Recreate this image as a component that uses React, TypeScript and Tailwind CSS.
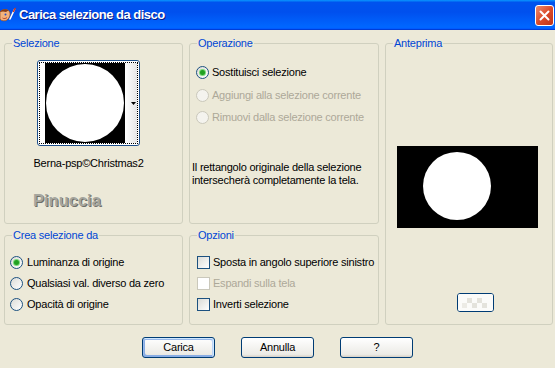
import React from 'react';

const ui = "font-['Liberation_Sans',Arial,sans-serif]";

function Group({ title, className = '', children }: { title: string; className?: string; children?: React.ReactNode }) {
    return (
        <div className={`relative border border-[#d0d0bf] rounded-[3px] ${className}`}>
            <span className="absolute -top-[7px] left-[7px] bg-[#ece9d8] px-[1px] leading-[13px] text-[#0046d5]">{title}</span>
            {children}
        </div>
    );
}

function Radio({ label, checked = false, disabled = false, gap = 'gap-[3px]', className = '' }: { label: string; checked?: boolean; disabled?: boolean; gap?: string; className?: string }) {
    return (
        <div className={`flex items-center h-[13px] ${gap} ${className}`}>
            <span className={`w-[13px] h-[13px] shrink-0 rounded-full border flex items-center justify-center ${disabled ? 'border-[#cac8bb] bg-[#f4f3ee]' : 'border-[#1c5180] bg-linear-to-br from-[#dcdcd7] to-white'}`}>
                {checked && <span className="w-[5px] h-[5px] rounded-full bg-[#21a121] shadow-[0_0_0_1px_#7ad97a]" />}
            </span>
            <span className={`leading-[13px] whitespace-nowrap ${disabled ? 'text-[#aca899]' : 'text-black'}`}>{label}</span>
        </div>
    );
}

function Check({ label, disabled = false, className = '' }: { label: string; disabled?: boolean; className?: string }) {
    return (
        <div className={`flex items-center h-[13px] gap-[3px] ${className}`}>
            <span className={`w-[13px] h-[13px] shrink-0 border ${disabled ? 'border-[#cac8bb] bg-white' : 'border-[#1c5180] bg-linear-to-br from-[#dcdcd7] to-white'}`} />
            <span className={`leading-[13px] whitespace-nowrap ${disabled ? 'text-[#aca899]' : 'text-black'}`}>{label}</span>
        </div>
    );
}

function XpButton({ label, isDefault = false }: { label: string; isDefault?: boolean }) {
    return (
        <button
            className={`w-[73px] h-[21px] border border-[#003c74] rounded-[3px] bg-[linear-gradient(180deg,#ffffff,#ecebe6_86%,#d6d0c5)] text-black leading-[13px] ${isDefault ? 'shadow-[inset_-1px_1px_#cee7ff,inset_1px_2px_#98b8ea,inset_-2px_2px_#bcd4f6,inset_1px_-1px_#89ade4,inset_2px_-2px_#89ade4]' : ''}`}
        >
            {label}
        </button>
    );
}

function AppIcon() {
    return (
        <svg width="16" height="16" viewBox="0 0 16 16">
            <path d="M0 5 C2 2 7 2 9 4 C11 6 10 11 7 13 C5 14.5 1 14 0 12 Z" fill="#f3b27c" stroke="#9a4a1c" strokeWidth="0.7" />
            <path d="M0 5 C2 2 6 1.5 8.5 3.5 L6 5 L3 4.5 Z" fill="#8a3f16" />
            <circle cx="5.5" cy="7.5" r="1" fill="#2450c8" />
            <path d="M2.5 11 C4 12 6 11.5 7 10.5" stroke="#b0301a" strokeWidth="0.8" fill="none" />
            <path d="M10 12 L14.5 2.5" stroke="#ffffff" strokeWidth="1.6" strokeLinecap="round" />
            <path d="M13.5 4.5 L15 1.5" stroke="#d03a1a" strokeWidth="1.6" strokeLinecap="round" />
        </svg>
    );
}

export default function App() {
    return (
        <div className={`w-[555px] h-[368px] bg-[#ece9d8] text-[11px] tracking-[-0.22px] overflow-hidden ${ui}`}>
            {/* title bar */}
            <div className="h-[30px] flex items-center bg-[linear-gradient(180deg,#0997ff,#0053ee_8%,#0050ee_40%,#0066ff_88%,#0066ff_93%,#005bff_95%,#003dd7_96%,#003dd7)]">
                <AppIcon />
                <span className="ml-[3px] text-white font-bold text-[13px] tracking-[-0.5px] [text-shadow:1px_1px_0_#0a1883]">Carica selezione da disco</span>
                <div className="ml-auto mr-[1px] w-[19px] h-[21px] rounded-[3px] border border-white bg-linear-to-br from-[#ec8a6c] via-[#dc4b2a] to-[#bd3318] flex items-center justify-center">
                    <svg width="11" height="11" viewBox="0 0 11 11">
                        <path d="M1.5 1.5 L9.5 9.5 M9.5 1.5 L1.5 9.5" stroke="#ffffff" strokeWidth="2" strokeLinecap="round" />
                    </svg>
                </div>
            </div>

            <div className="pt-[13px] pl-[4px]">
                <div className="grid grid-cols-[179px_190px_168px] grid-rows-[181px_90px] gap-x-[6px] gap-y-[11px]">
                    <Group title="Selezione">
                        <div className="ml-[27px] w-[113px] mt-[16px] flex flex-col items-center">
                            <div className="w-[103px] h-[86px] border border-[#1c4e8a] rounded-[3px] bg-white p-[1px]">
                                <div className="h-full border border-dotted border-black flex pl-[5px]">
                                    <svg width="80" height="80" viewBox="0 0 80 80" className="shrink-0">
                                        <rect width="80" height="80" fill="#000" />
                                        <circle cx="40" cy="40" r="39" fill="#fff" />
                                    </svg>
                                    <div className="flex-1 h-[80px] bg-linear-to-r from-white to-[#e6e6e6] flex items-center justify-end pr-[1px]">
                                        <svg width="5" height="3" viewBox="0 0 5 3">
                                            <path d="M0 0 H5 L2.5 3 Z" fill="#000" />
                                        </svg>
                                    </div>
                                </div>
                            </div>
                            <span className="mt-[11px] leading-[13px] text-black whitespace-nowrap">Berna-psp©Christmas2</span>
                        </div>
                        <div className="ml-[28px] mt-[20px] text-[16.5px] tracking-normal leading-[20px] font-bold text-[#a6a69e] [text-shadow:1px_1px_0_#6f6f68]">Pinuccia</div>
                    </Group>

                    <Group title="Operazione">
                        <div className="flex flex-col pl-[6px]">
                            <Radio label="Sostituisci selezione" checked className="mt-[22px]" />
                            <Radio label="Aggiungi alla selezione corrente" disabled className="mt-[10px]" />
                            <Radio label="Rimuovi dalla selezione corrente" disabled className="mt-[9px]" />
                        </div>
                        <p className="mt-[37px] pl-[2px] leading-[13px] text-black">
                            Il rettangolo originale della selezione
                            <br />
                            intersecherà completamente la tela.
                        </p>
                    </Group>

                    <Group title="Anteprima" className="row-span-2">
                        <div className="flex flex-col">
                            <svg width="141" height="82" viewBox="0 0 141 82" className="mt-[102px] ml-[11px]">
                                <rect width="141" height="82" fill="#000" />
                                <circle cx="60" cy="40" r="34" fill="#fff" />
                            </svg>
                            <div className="mt-[65px] ml-[71px] w-[37px] h-[19px] border border-[#003c74] rounded-[3px] bg-[#f4f3ee] overflow-hidden flex items-center justify-center">
                                <svg width="35" height="17" viewBox="0 0 35 17">
                                    <rect width="35" height="17" fill="#fbfbf9" />
                                    <rect x="9" y="4" width="5" height="5" fill="#e4e3dc" />
                                    <rect x="19" y="4" width="5" height="5" fill="#e4e3dc" />
                                    <rect x="14" y="9" width="5" height="5" fill="#e4e3dc" />
                                    <rect x="24" y="9" width="5" height="5" fill="#e4e3dc" />
                                    <rect x="4" y="9" width="5" height="5" fill="#ecebe5" />
                                </svg>
                            </div>
                        </div>
                    </Group>

                    <Group title="Crea selezione da">
                        <div className="flex flex-col pl-[5px] pt-[20px] gap-[8px]">
                            <Radio label="Luminanza di origine" checked gap="gap-[4px]" />
                            <Radio label="Qualsiasi val. diverso da zero" gap="gap-[4px]" />
                            <Radio label="Opacità di origine" gap="gap-[4px]" />
                        </div>
                    </Group>

                    <Group title="Opzioni">
                        <div className="flex flex-col pl-[7px] pt-[20px] gap-[8px]">
                            <Check label="Sposta in angolo superiore sinistro" />
                            <Check label="Espandi sulla tela" disabled />
                            <Check label="Inverti selezione" />
                        </div>
                    </Group>
                </div>

                <div className="mt-[12px] pl-[138px] flex gap-[26px]">
                    <XpButton label="Carica" isDefault />
                    <XpButton label="Annulla" />
                    <XpButton label="?" />
                </div>
            </div>
        </div>
    );
}
